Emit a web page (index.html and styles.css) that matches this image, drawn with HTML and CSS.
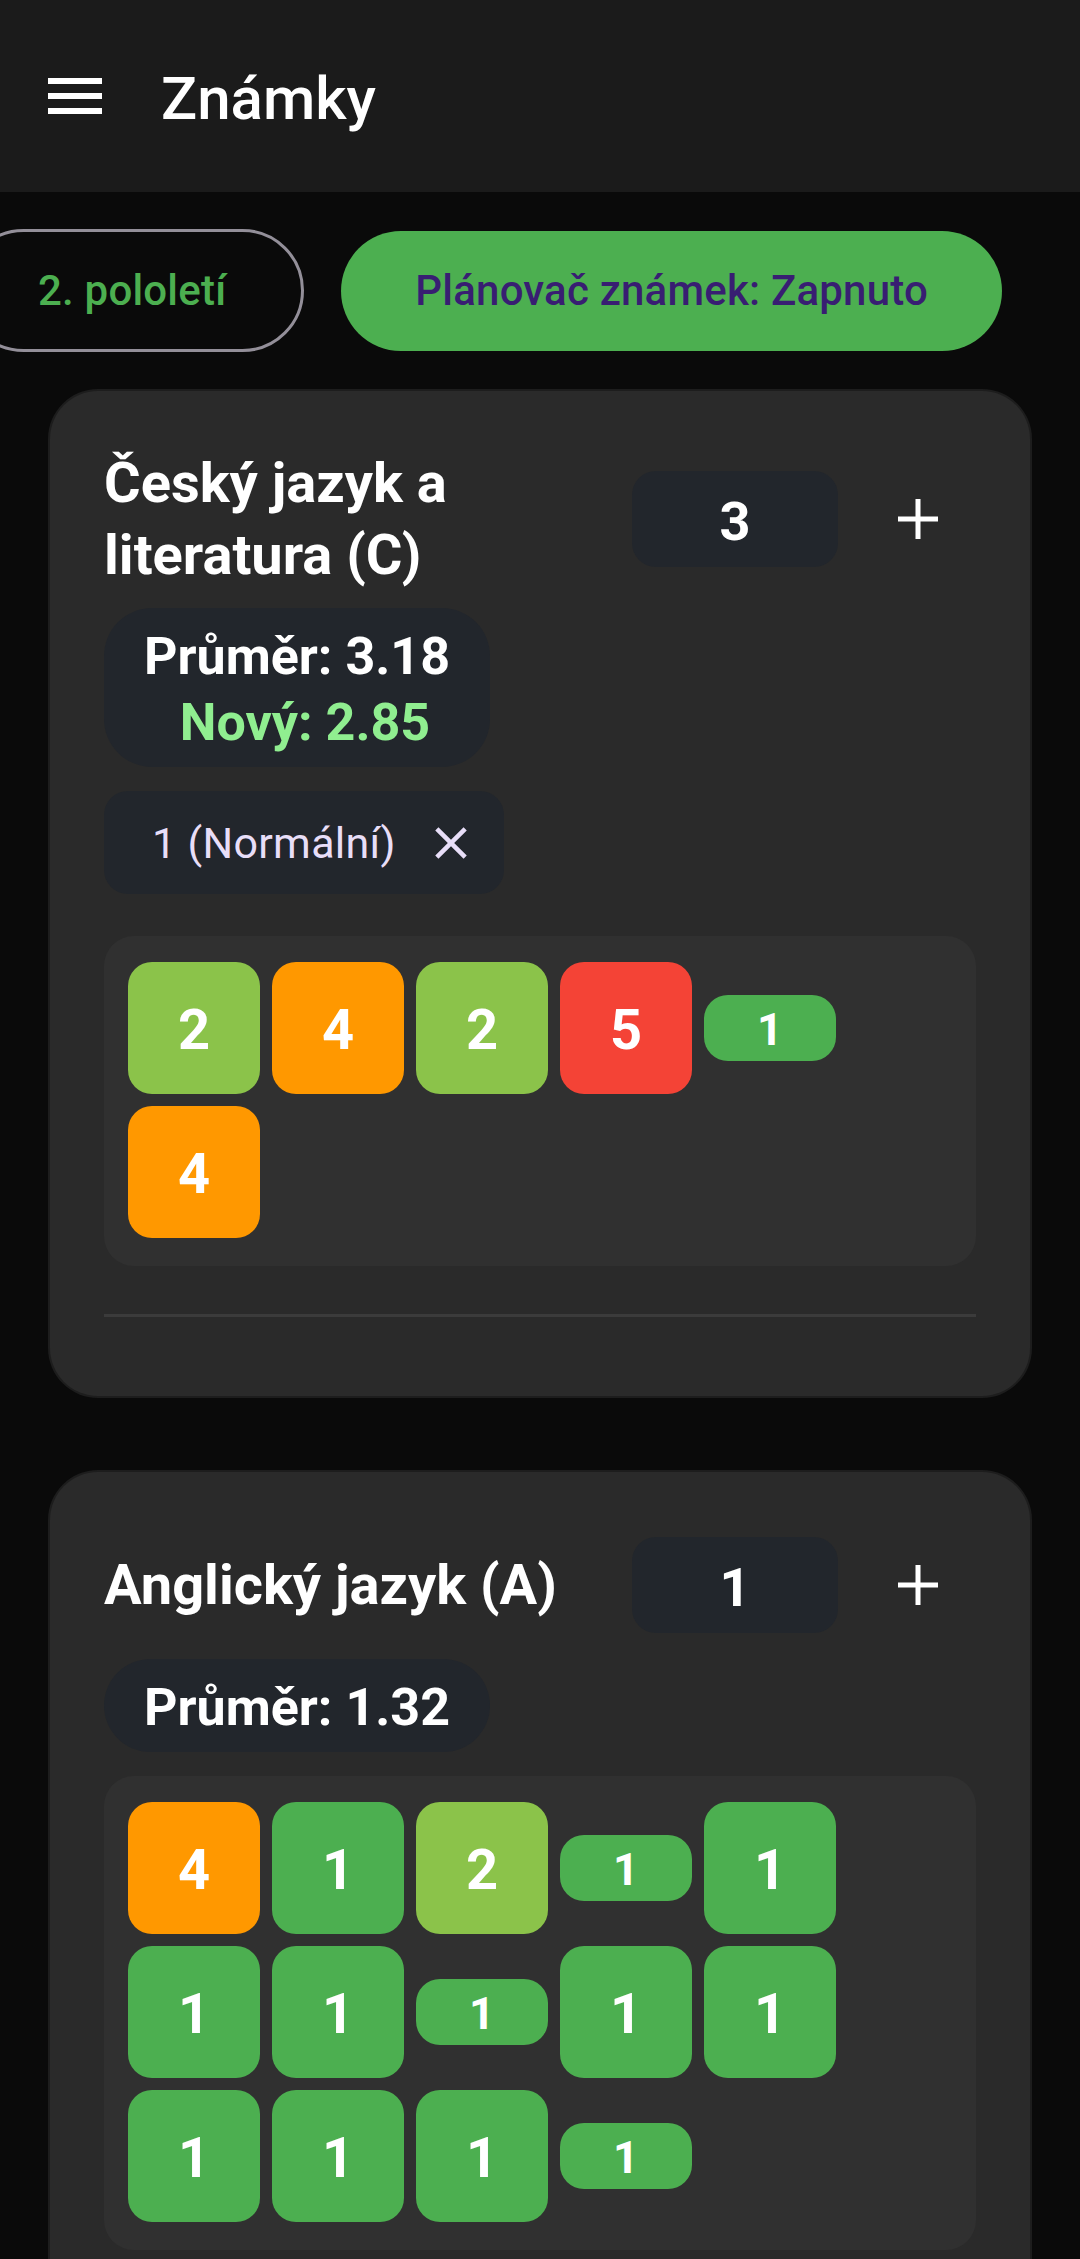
FILE: index.html
```html
<!DOCTYPE html>
<html lang="cs">
<head>
<meta charset="utf-8">
<title>Známky</title>
<link rel="stylesheet" href="styles.css">
</head>
<body>
<header class="topbar">
  <svg class="menu-icon" viewBox="0 0 24 24" width="72" height="72" aria-hidden="true"><path fill="#ffffff" d="M3 18h18v-2H3v2zm0-5h18v-2H3v2zm0-7v2h18V6H3z"/></svg>
  <h1 class="topbar-title">Známky</h1>
</header>
<main class="content">
  <div class="filters">
    <button class="btn btn-outlined">2. pololetí</button>
    <button class="btn btn-filled">Plánovač známek: Zapnuto</button>
  </div>

  <section class="card">
    <div class="card-head">
      <h2 class="subject">Český jazyk a literatura (C)</h2>
      <div class="final-grade">3</div>
      <button class="add-btn" aria-label="Přidat"><svg viewBox="0 0 40 40" width="40" height="40"><path d="M20 0v40M0 20h40" stroke="#ffffff" stroke-width="5"/></svg></button>
    </div>
    <div class="avg-box">
      <div class="avg">Průměr: 3.18</div>
      <div class="avg-new">Nový: 2.85</div>
    </div>
    <div class="input-chip">
      <span class="chip-label">1 (Normální)</span>
      <svg class="chip-close" viewBox="0 0 24 24" width="54" height="54"><path fill="#e8def8" d="M19 6.41L17.59 5 12 10.59 6.41 5 5 6.41 10.59 12 5 17.59 6.41 19 12 13.41 17.59 19 19 17.59 13.41 12z"/></svg>
    </div>
    <div class="grades">
      <span class="grade g2">2</span>
      <span class="grade g4">4</span>
      <span class="grade g2">2</span>
      <span class="grade g5">5</span>
      <span class="grade g1 small">1</span>
      <span class="grade g4">4</span>
    </div>
    <div class="divider"></div>
  </section>

  <section class="card">
    <div class="card-head">
      <h2 class="subject">Anglický jazyk (A)</h2>
      <div class="final-grade">1</div>
      <button class="add-btn" aria-label="Přidat"><svg viewBox="0 0 40 40" width="40" height="40"><path d="M20 0v40M0 20h40" stroke="#ffffff" stroke-width="5"/></svg></button>
    </div>
    <div class="avg-box">
      <div class="avg">Průměr: 1.32</div>
    </div>
    <div class="grades">
      <span class="grade g4">4</span>
      <span class="grade g1">1</span>
      <span class="grade g2">2</span>
      <span class="grade g1 small">1</span>
      <span class="grade g1">1</span>
      <span class="grade g1">1</span>
      <span class="grade g1">1</span>
      <span class="grade g1 small">1</span>
      <span class="grade g1">1</span>
      <span class="grade g1">1</span>
      <span class="grade g1">1</span>
      <span class="grade g1">1</span>
      <span class="grade g1">1</span>
      <span class="grade g1 small">1</span>
    </div>
    <div class="divider"></div>
  </section>
</main>
</body>
</html>
```

FILE: styles.css
```css
* { box-sizing: border-box; }

body {
  margin: 0;
  background: #0a0a0a;
  color: #ffffff;
  font-family: Roboto, "Noto Sans", "Liberation Sans", sans-serif;
  overflow-x: hidden;
}

.topbar {
  height: 192px;
  background: #1b1b1b;
  display: flex;
  align-items: center;
  padding-left: 39px;
}

.menu-icon { display: block; flex: none; }

.topbar-title {
  margin: 6px 0 0 50px;
  font-size: 60px;
  font-weight: 500;
  line-height: 60px;
}

.content { padding-bottom: 60px; }

.filters {
  display: flex;
  align-items: center;
  gap: 37px;
  margin: 37px 0 0 -38px;
}

.btn {
  font-family: inherit;
  font-size: 42px;
  font-weight: 500;
  letter-spacing: 0.2px;
  display: flex;
  align-items: center;
  justify-content: center;
  flex: none;
  white-space: nowrap;
  cursor: pointer;
}

.btn-outlined {
  height: 123px;
  padding: 0 75px 0 73px;
  border: 3px solid #938f99;
  border-radius: 62px;
  background: transparent;
  color: #4caf50;
}

.btn-filled {
  height: 120px;
  padding: 0 74px;
  border: 0;
  border-radius: 60px;
  background: #4caf50;
  color: #381e72;
}

.card {
  margin: 39px 50px 0;
  background: #2a2a2a;
  border-radius: 48px;
  padding: 56px 54px 54px;
  box-shadow: 0 0 0 2px #1d1d1d;
  display: flex;
  flex-direction: column;
}

.card + .card { margin-top: 76px; }

.card-head {
  display: flex;
  align-items: center;
}

.subject {
  flex: 1;
  margin: 0;
  font-size: 56px;
  font-weight: 700;
  line-height: 72px;
}

.final-grade {
  flex: none;
  width: 206px;
  height: 96px;
  margin-left: 24px;
  background: #22262c;
  border-radius: 24px;
  display: flex;
  align-items: center;
  justify-content: center;
  padding-top: 5px;
  font-size: 54px;
  font-weight: 700;
  line-height: 1;
}

.add-btn {
  flex: none;
  width: 116px;
  height: 114px;
  margin-left: 22px;
  padding: 0;
  border: 0;
  background: transparent;
  display: flex;
  align-items: center;
  justify-content: center;
}

.add-btn svg { display: block; }

.avg-box {
  align-self: flex-start;
  margin-top: 17px;
  padding: 16px 40px 11px;
  background: #22262c;
  border-radius: 48px;
  text-align: center;
  font-size: 52px;
  font-weight: 700;
  line-height: 66px;
}

.avg-new {
  color: #90ee90;
  padding-left: 16px;
}

.input-chip {
  align-self: flex-start;
  height: 103px;
  margin: 24px 0 18px;
  padding: 0 26px 0 48px;
  display: flex;
  align-items: center;
  gap: 28px;
  background: #22262c;
  border-radius: 24px;
  color: #e8def8;
  font-size: 43px;
  font-weight: 400;
  letter-spacing: 0.3px;
}

.chip-close { display: block; flex: none; }

.grades {
  margin-top: 24px;
  background: #303030;
  border-radius: 30px;
  padding: 26px 24px 28px;
  display: flex;
  flex-wrap: wrap;
  align-items: center;
  gap: 12px;
}

.grade {
  width: 132px;
  height: 132px;
  border-radius: 24px;
  display: flex;
  align-items: center;
  justify-content: center;
  padding-top: 4px;
  color: #ffffff;
  font-size: 56px;
  font-weight: 700;
  line-height: 1;
}

.grade.small {
  height: 66px;
  font-size: 45px;
  padding-top: 2px;
}

.g1 { background: #4caf50; }
.g2 { background: #8bc34a; }
.g4 { background: #ff9800; }
.g5 { background: #f44336; }

.divider {
  height: 3px;
  margin: 48px 0 25px;
  background: #3b3b3b;
  flex: none;
}
```
